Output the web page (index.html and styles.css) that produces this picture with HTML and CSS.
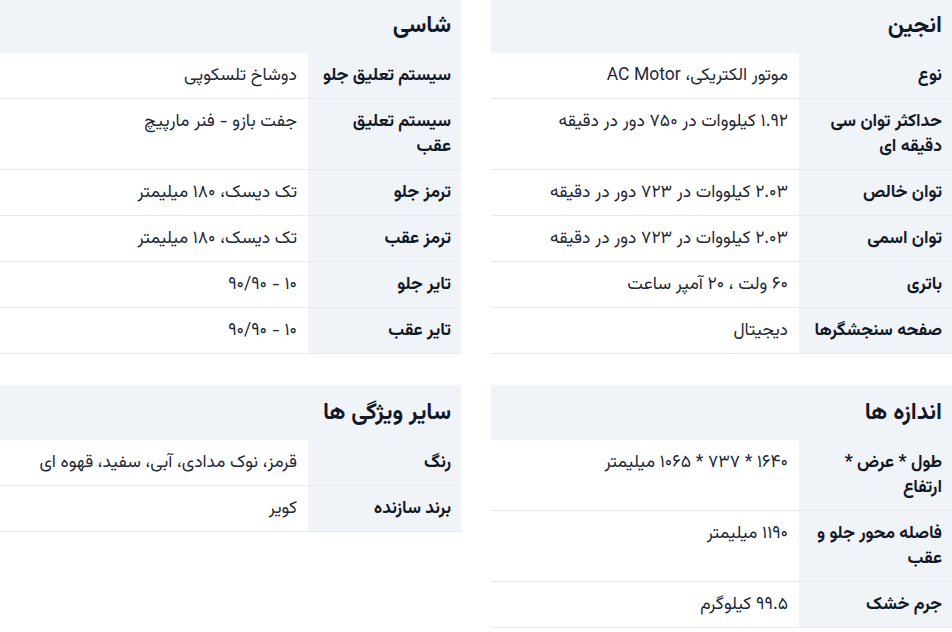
FILE: index.html
```html
<!DOCTYPE html>
<html lang="fa" dir="rtl">
<head>
<meta charset="utf-8">
<title>مشخصات فنی</title>
<link rel="stylesheet" href="styles.css">
</head>
<body>
<div class="specs">
  <div class="col">
    <section class="group">
      <h3 class="group-title">انجین</h3>
      <div class="row"><div class="label">نوع</div><div class="value">موتور الکتریکی، AC Motor</div></div>
      <div class="row"><div class="label">حداکثر توان سی دقیقه ای</div><div class="value">۱.۹۲ کیلووات در ۷۵۰ دور در دقیقه</div></div>
      <div class="row"><div class="label">توان خالص</div><div class="value">۲.۰۳ کیلووات در ۷۲۳ دور در دقیقه</div></div>
      <div class="row"><div class="label">توان اسمی</div><div class="value">۲.۰۳ کیلووات در ۷۲۳ دور در دقیقه</div></div>
      <div class="row"><div class="label">باتری</div><div class="value">۶۰ ولت ، ۲۰ آمپر ساعت</div></div>
      <div class="row"><div class="label">صفحه سنجشگرها</div><div class="value">دیجیتال</div></div>
    </section>
    <section class="group">
      <h3 class="group-title">اندازه ها</h3>
      <div class="row"><div class="label">طول * عرض * ارتفاع</div><div class="value">۱۶۴۰ * ۷۳۷ * ۱۰۶۵ میلیمتر</div></div>
      <div class="row"><div class="label">فاصله محور جلو و عقب</div><div class="value">۱۱۹۰ میلیمتر</div></div>
      <div class="row"><div class="label">جرم خشک</div><div class="value">۹۹.۵ کیلوگرم</div></div>
    </section>
  </div>
  <div class="col">
    <section class="group">
      <h3 class="group-title">شاسی</h3>
      <div class="row"><div class="label">سیستم تعلیق جلو</div><div class="value">دوشاخ تلسکوپی</div></div>
      <div class="row"><div class="label">سیستم تعلیق عقب</div><div class="value">جفت بازو - فنر مارپیچ</div></div>
      <div class="row"><div class="label">ترمز جلو</div><div class="value">تک دیسک، ۱۸۰ میلیمتر</div></div>
      <div class="row"><div class="label">ترمز عقب</div><div class="value">تک دیسک، ۱۸۰ میلیمتر</div></div>
      <div class="row"><div class="label">تایر جلو</div><div class="value">۱۰ - ۹۰/۹۰</div></div>
      <div class="row"><div class="label">تایر عقب</div><div class="value">۱۰ - ۹۰/۹۰</div></div>
    </section>
    <section class="group">
      <h3 class="group-title">سایر ویژگی ها</h3>
      <div class="row"><div class="label">رنگ</div><div class="value">قرمز، نوک مدادی، آبی، سفید، قهوه ای</div></div>
      <div class="row"><div class="label">برند سازنده</div><div class="value">کویر</div></div>
    </section>
  </div>
</div>
</body>
</html>
```
FILE: styles.css
```css
* { box-sizing: border-box; }
html, body {
  margin: 0;
  padding: 0;
  background: #ffffff;
}
body {
  font-family: "Vazirmatn", "DejaVu Sans", sans-serif;
  color: #1f2937;
}
.specs {
  display: grid;
  grid-template-columns: 1fr 1fr;
  column-gap: 30px;
  width: 952px;
  margin-top: -2px;
}
.col {
  display: flex;
  flex-direction: column;
  gap: 31px;
}
.group {
  display: flex;
  flex-direction: column;
}
.group-title {
  margin: 0;
  background: #f0f3f8;
  font-size: 23px;
  font-weight: 700;
  line-height: 30px;
  padding: 13px 10px 12px;
  color: #111827;
}
.row {
  display: grid;
  grid-template-columns: 153px 1fr;
  border-bottom: 1px solid #e8eaee;
}
.label {
  background: #f0f3f8;
  font-weight: 700;
  font-size: 17.5px;
  line-height: 25px;
  padding: 10px 10px 10px 8px;
  color: #111827;
}
.value {
  font-size: 17.5px;
  line-height: 25px;
  padding: 10px 11px 10px 10px;
  color: #1f2937;
}
```
